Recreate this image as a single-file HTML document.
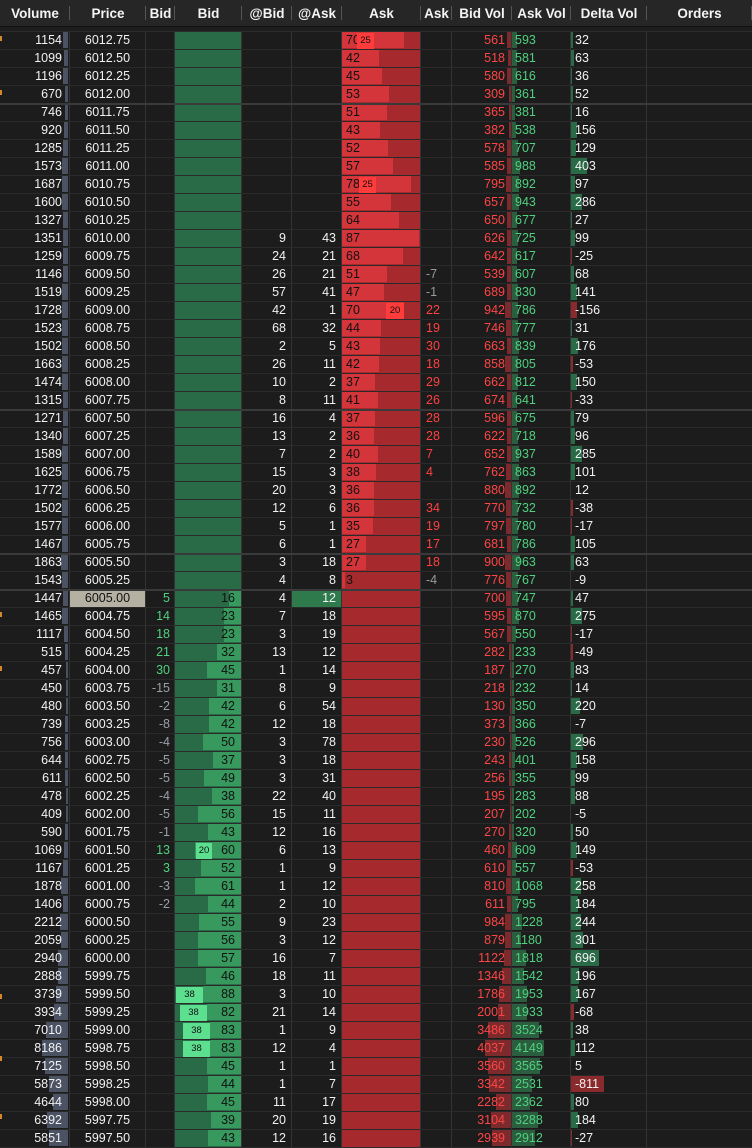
<!DOCTYPE html>
<html><head><meta charset="utf-8"><style>
*{margin:0;padding:0;box-sizing:border-box}
body{width:752px;height:1148px;background:#1c1c1c;font-family:"Liberation Sans",Arial,sans-serif;font-size:12.5px;color:#f2f2f2;overflow:hidden;position:relative}
.hd{display:flex;height:27px;background:#262626;border-bottom:1px solid #111}
.hd div{font-weight:bold;font-size:13.5px;line-height:27px;text-align:center;color:#f4f4f4;position:relative}
.hd div:after{content:"";position:absolute;right:0;top:6px;height:14px;width:1px;background:#555}
.strip{height:5px;background:#1e1e1e;border-bottom:1px solid #2c2c2c}
.r{display:flex;height:18px}
.r>div{position:relative;height:18px;line-height:17px;border-right:1px solid #333;border-bottom:1px solid #2a2a2a;white-space:nowrap;background:#1c1c1c}
.r i{position:absolute;top:0;bottom:1px;display:block}
.r em{font-style:normal;position:relative}
.a{width:70px;text-align:right;padding-right:7px}
.a i{right:1px;background:#4a5263}
.b{width:76px;text-align:center}
.c{width:29px;text-align:right;padding-right:4px}
.d{width:67px;text-align:right;padding-right:6px;color:#111;background:#2a6b47!important}
.d i{right:0;background:#37995e}
.e{width:50px;text-align:right;padding-right:5px}
.f{width:50px;text-align:right;padding-right:5px}
.g{width:79px;padding-left:4px;color:#111;background:#a5292d!important}
.g i{left:0;background:#d3353a}
.h{width:31px;padding-left:5px}
.i{width:60px;text-align:right;padding-right:6px;color:#ff4545}
.i i{right:0;background:#7c2a2c}
.j{width:59px;padding-left:3px;color:#4fd17f}
.j i{left:0;background:#2a5e3e}
.k{width:76px;padding-left:4px}
.k i.p{left:0;background:#2a6b47}
.k i.n{left:0;background:#8a2a2c}
.l{width:105px;border-right:none!important}
.gp{color:#4fd17f}.gn{color:#9aa0a8}.rp{color:#ff4040}.rn{color:#999}
.bx{position:absolute;top:1px;height:16px;font-size:9.5px;line-height:16px;text-align:center;color:#111}
.rb{background:#ff3b3b}.gb{background:#5ce08f}
.sep{position:absolute;left:0;width:752px;height:2px;background:#3a3a3a}
.om{position:absolute;left:0;width:2px;height:5px;background:#d08a2a}
</style></head><body>
<div class="hd"><div style="width:70px">Volume</div><div style="width:76px">Price</div><div style="width:29px">Bid</div><div style="width:67px">Bid</div><div style="width:50px">@Bid</div><div style="width:50px">@Ask</div><div style="width:79px">Ask</div><div style="width:31px">Ask</div><div style="width:60px">Bid Vol</div><div style="width:59px">Ask Vol</div><div style="width:76px">Delta Vol</div><div style="width:105px">Orders</div></div>
<div class="strip"></div>

<div class="r"><div class="a"><i style="width:5px"></i><em>1154</em></div><div class="b">6012.75</div><div class="c"></div><div class="d"></div><div class="e"></div><div class="f"></div><div class="g"><i style="width:62px"></i><em>70</em><span class="bx rb" style="left:15px;width:17px">25</span></div><div class="h"></div><div class="i"><i style="width:4px"></i><em>561</em></div><div class="j"><i style="width:5px"></i><em>593</em></div><div class="k"><i class="p" style="width:2px"></i><em>32</em></div><div class="l"></div></div>
<div class="r"><div class="a"><i style="width:4px"></i><em>1099</em></div><div class="b">6012.50</div><div class="c"></div><div class="d"></div><div class="e"></div><div class="f"></div><div class="g"><i style="width:37px"></i><em>42</em></div><div class="h"></div><div class="i"><i style="width:3px"></i><em>518</em></div><div class="j"><i style="width:5px"></i><em>581</em></div><div class="k"><i class="p" style="width:3px"></i><em>63</em></div><div class="l"></div></div>
<div class="r"><div class="a"><i style="width:5px"></i><em>1196</em></div><div class="b">6012.25</div><div class="c"></div><div class="d"></div><div class="e"></div><div class="f"></div><div class="g"><i style="width:40px"></i><em>45</em></div><div class="h"></div><div class="i"><i style="width:4px"></i><em>580</em></div><div class="j"><i style="width:5px"></i><em>616</em></div><div class="k"><i class="p" style="width:1px"></i><em>36</em></div><div class="l"></div></div>
<div class="r"><div class="a"><i style="width:3px"></i><em>670</em></div><div class="b">6012.00</div><div class="c"></div><div class="d"></div><div class="e"></div><div class="f"></div><div class="g"><i style="width:47px"></i><em>53</em></div><div class="h"></div><div class="i"><i style="width:2px"></i><em>309</em></div><div class="j"><i style="width:3px"></i><em>361</em></div><div class="k"><i class="p" style="width:2px"></i><em>52</em></div><div class="l"></div></div>
<div class="r"><div class="a"><i style="width:3px"></i><em>746</em></div><div class="b">6011.75</div><div class="c"></div><div class="d"></div><div class="e"></div><div class="f"></div><div class="g"><i style="width:45px"></i><em>51</em></div><div class="h"></div><div class="i"><i style="width:2px"></i><em>365</em></div><div class="j"><i style="width:3px"></i><em>381</em></div><div class="k"><i class="p" style="width:1px"></i><em>16</em></div><div class="l"></div></div>
<div class="r"><div class="a"><i style="width:4px"></i><em>920</em></div><div class="b">6011.50</div><div class="c"></div><div class="d"></div><div class="e"></div><div class="f"></div><div class="g"><i style="width:38px"></i><em>43</em></div><div class="h"></div><div class="i"><i style="width:2px"></i><em>382</em></div><div class="j"><i style="width:4px"></i><em>538</em></div><div class="k"><i class="p" style="width:6px"></i><em>156</em></div><div class="l"></div></div>
<div class="r"><div class="a"><i style="width:5px"></i><em>1285</em></div><div class="b">6011.25</div><div class="c"></div><div class="d"></div><div class="e"></div><div class="f"></div><div class="g"><i style="width:46px"></i><em>52</em></div><div class="h"></div><div class="i"><i style="width:4px"></i><em>578</em></div><div class="j"><i style="width:6px"></i><em>707</em></div><div class="k"><i class="p" style="width:5px"></i><em>129</em></div><div class="l"></div></div>
<div class="r"><div class="a"><i style="width:6px"></i><em>1573</em></div><div class="b">6011.00</div><div class="c"></div><div class="d"></div><div class="e"></div><div class="f"></div><div class="g"><i style="width:51px"></i><em>57</em></div><div class="h"></div><div class="i"><i style="width:4px"></i><em>585</em></div><div class="j"><i style="width:8px"></i><em>988</em></div><div class="k"><i class="p" style="width:16px"></i><em>403</em></div><div class="l"></div></div>
<div class="r"><div class="a"><i style="width:6px"></i><em>1687</em></div><div class="b">6010.75</div><div class="c"></div><div class="d"></div><div class="e"></div><div class="f"></div><div class="g"><i style="width:69px"></i><em>78</em><span class="bx rb" style="left:17px;width:17px">25</span></div><div class="h"></div><div class="i"><i style="width:5px"></i><em>795</em></div><div class="j"><i style="width:7px"></i><em>892</em></div><div class="k"><i class="p" style="width:4px"></i><em>97</em></div><div class="l"></div></div>
<div class="r"><div class="a"><i style="width:6px"></i><em>1600</em></div><div class="b">6010.50</div><div class="c"></div><div class="d"></div><div class="e"></div><div class="f"></div><div class="g"><i style="width:49px"></i><em>55</em></div><div class="h"></div><div class="i"><i style="width:4px"></i><em>657</em></div><div class="j"><i style="width:7px"></i><em>943</em></div><div class="k"><i class="p" style="width:11px"></i><em>286</em></div><div class="l"></div></div>
<div class="r"><div class="a"><i style="width:5px"></i><em>1327</em></div><div class="b">6010.25</div><div class="c"></div><div class="d"></div><div class="e"></div><div class="f"></div><div class="g"><i style="width:57px"></i><em>64</em></div><div class="h"></div><div class="i"><i style="width:4px"></i><em>650</em></div><div class="j"><i style="width:5px"></i><em>677</em></div><div class="k"><i class="p" style="width:1px"></i><em>27</em></div><div class="l"></div></div>
<div class="r"><div class="a"><i style="width:5px"></i><em>1351</em></div><div class="b">6010.00</div><div class="c"></div><div class="d"></div><div class="e">9</div><div class="f">43</div><div class="g"><i style="width:77px"></i><em>87</em></div><div class="h"></div><div class="i"><i style="width:4px"></i><em>626</em></div><div class="j"><i style="width:6px"></i><em>725</em></div><div class="k"><i class="p" style="width:4px"></i><em>99</em></div><div class="l"></div></div>
<div class="r"><div class="a"><i style="width:5px"></i><em>1259</em></div><div class="b">6009.75</div><div class="c"></div><div class="d"></div><div class="e">24</div><div class="f">21</div><div class="g"><i style="width:61px"></i><em>68</em></div><div class="h"></div><div class="i"><i style="width:4px"></i><em>642</em></div><div class="j"><i style="width:5px"></i><em>617</em></div><div class="k"><i class="n" style="width:1px"></i><em>-25</em></div><div class="l"></div></div>
<div class="r"><div class="a"><i style="width:5px"></i><em>1146</em></div><div class="b">6009.50</div><div class="c"></div><div class="d"></div><div class="e">26</div><div class="f">21</div><div class="g"><i style="width:45px"></i><em>51</em></div><div class="h rn">-7</div><div class="i"><i style="width:4px"></i><em>539</em></div><div class="j"><i style="width:5px"></i><em>607</em></div><div class="k"><i class="p" style="width:3px"></i><em>68</em></div><div class="l"></div></div>
<div class="r"><div class="a"><i style="width:6px"></i><em>1519</em></div><div class="b">6009.25</div><div class="c"></div><div class="d"></div><div class="e">57</div><div class="f">41</div><div class="g"><i style="width:42px"></i><em>47</em></div><div class="h rn">-1</div><div class="i"><i style="width:4px"></i><em>689</em></div><div class="j"><i style="width:6px"></i><em>830</em></div><div class="k"><i class="p" style="width:6px"></i><em>141</em></div><div class="l"></div></div>
<div class="r"><div class="a"><i style="width:6px"></i><em>1728</em></div><div class="b">6009.00</div><div class="c"></div><div class="d"></div><div class="e">42</div><div class="f">1</div><div class="g"><i style="width:62px"></i><em>70</em><span class="bx rb" style="left:44px;width:18px">20</span></div><div class="h rp">22</div><div class="i"><i style="width:6px"></i><em>942</em></div><div class="j"><i style="width:6px"></i><em>786</em></div><div class="k"><i class="n" style="width:6px"></i><em>-156</em></div><div class="l"></div></div>
<div class="r"><div class="a"><i style="width:6px"></i><em>1523</em></div><div class="b">6008.75</div><div class="c"></div><div class="d"></div><div class="e">68</div><div class="f">32</div><div class="g"><i style="width:39px"></i><em>44</em></div><div class="h rp">19</div><div class="i"><i style="width:5px"></i><em>746</em></div><div class="j"><i style="width:6px"></i><em>777</em></div><div class="k"><i class="p" style="width:1px"></i><em>31</em></div><div class="l"></div></div>
<div class="r"><div class="a"><i style="width:6px"></i><em>1502</em></div><div class="b">6008.50</div><div class="c"></div><div class="d"></div><div class="e">2</div><div class="f">5</div><div class="g"><i style="width:38px"></i><em>43</em></div><div class="h rp">30</div><div class="i"><i style="width:4px"></i><em>663</em></div><div class="j"><i style="width:7px"></i><em>839</em></div><div class="k"><i class="p" style="width:7px"></i><em>176</em></div><div class="l"></div></div>
<div class="r"><div class="a"><i style="width:6px"></i><em>1663</em></div><div class="b">6008.25</div><div class="c"></div><div class="d"></div><div class="e">26</div><div class="f">11</div><div class="g"><i style="width:37px"></i><em>42</em></div><div class="h rp">18</div><div class="i"><i style="width:6px"></i><em>858</em></div><div class="j"><i style="width:6px"></i><em>805</em></div><div class="k"><i class="n" style="width:2px"></i><em>-53</em></div><div class="l"></div></div>
<div class="r"><div class="a"><i style="width:6px"></i><em>1474</em></div><div class="b">6008.00</div><div class="c"></div><div class="d"></div><div class="e">10</div><div class="f">2</div><div class="g"><i style="width:33px"></i><em>37</em></div><div class="h rp">29</div><div class="i"><i style="width:4px"></i><em>662</em></div><div class="j"><i style="width:6px"></i><em>812</em></div><div class="k"><i class="p" style="width:6px"></i><em>150</em></div><div class="l"></div></div>
<div class="r"><div class="a"><i style="width:5px"></i><em>1315</em></div><div class="b">6007.75</div><div class="c"></div><div class="d"></div><div class="e">8</div><div class="f">11</div><div class="g"><i style="width:36px"></i><em>41</em></div><div class="h rp">26</div><div class="i"><i style="width:4px"></i><em>674</em></div><div class="j"><i style="width:5px"></i><em>641</em></div><div class="k"><i class="n" style="width:1px"></i><em>-33</em></div><div class="l"></div></div>
<div class="r"><div class="a"><i style="width:5px"></i><em>1271</em></div><div class="b">6007.50</div><div class="c"></div><div class="d"></div><div class="e">16</div><div class="f">4</div><div class="g"><i style="width:33px"></i><em>37</em></div><div class="h rp">28</div><div class="i"><i style="width:4px"></i><em>596</em></div><div class="j"><i style="width:5px"></i><em>675</em></div><div class="k"><i class="p" style="width:3px"></i><em>79</em></div><div class="l"></div></div>
<div class="r"><div class="a"><i style="width:5px"></i><em>1340</em></div><div class="b">6007.25</div><div class="c"></div><div class="d"></div><div class="e">13</div><div class="f">2</div><div class="g"><i style="width:32px"></i><em>36</em></div><div class="h rp">28</div><div class="i"><i style="width:4px"></i><em>622</em></div><div class="j"><i style="width:6px"></i><em>718</em></div><div class="k"><i class="p" style="width:4px"></i><em>96</em></div><div class="l"></div></div>
<div class="r"><div class="a"><i style="width:6px"></i><em>1589</em></div><div class="b">6007.00</div><div class="c"></div><div class="d"></div><div class="e">7</div><div class="f">2</div><div class="g"><i style="width:36px"></i><em>40</em></div><div class="h rp">7</div><div class="i"><i style="width:4px"></i><em>652</em></div><div class="j"><i style="width:7px"></i><em>937</em></div><div class="k"><i class="p" style="width:11px"></i><em>285</em></div><div class="l"></div></div>
<div class="r"><div class="a"><i style="width:6px"></i><em>1625</em></div><div class="b">6006.75</div><div class="c"></div><div class="d"></div><div class="e">15</div><div class="f">3</div><div class="g"><i style="width:34px"></i><em>38</em></div><div class="h rp">4</div><div class="i"><i style="width:5px"></i><em>762</em></div><div class="j"><i style="width:7px"></i><em>863</em></div><div class="k"><i class="p" style="width:4px"></i><em>101</em></div><div class="l"></div></div>
<div class="r"><div class="a"><i style="width:6px"></i><em>1772</em></div><div class="b">6006.50</div><div class="c"></div><div class="d"></div><div class="e">20</div><div class="f">3</div><div class="g"><i style="width:32px"></i><em>36</em></div><div class="h"></div><div class="i"><i style="width:6px"></i><em>880</em></div><div class="j"><i style="width:7px"></i><em>892</em></div><div class="k"><em>12</em></div><div class="l"></div></div>
<div class="r"><div class="a"><i style="width:6px"></i><em>1502</em></div><div class="b">6006.25</div><div class="c"></div><div class="d"></div><div class="e">12</div><div class="f">6</div><div class="g"><i style="width:32px"></i><em>36</em></div><div class="h rp">34</div><div class="i"><i style="width:5px"></i><em>770</em></div><div class="j"><i style="width:6px"></i><em>732</em></div><div class="k"><i class="n" style="width:2px"></i><em>-38</em></div><div class="l"></div></div>
<div class="r"><div class="a"><i style="width:6px"></i><em>1577</em></div><div class="b">6006.00</div><div class="c"></div><div class="d"></div><div class="e">5</div><div class="f">1</div><div class="g"><i style="width:31px"></i><em>35</em></div><div class="h rp">19</div><div class="i"><i style="width:5px"></i><em>797</em></div><div class="j"><i style="width:6px"></i><em>780</em></div><div class="k"><i class="n" style="width:1px"></i><em>-17</em></div><div class="l"></div></div>
<div class="r"><div class="a"><i style="width:6px"></i><em>1467</em></div><div class="b">6005.75</div><div class="c"></div><div class="d"></div><div class="e">6</div><div class="f">1</div><div class="g"><i style="width:24px"></i><em>27</em></div><div class="h rp">17</div><div class="i"><i style="width:4px"></i><em>681</em></div><div class="j"><i style="width:6px"></i><em>786</em></div><div class="k"><i class="p" style="width:4px"></i><em>105</em></div><div class="l"></div></div>
<div class="r"><div class="a"><i style="width:7px"></i><em>1863</em></div><div class="b">6005.50</div><div class="c"></div><div class="d"></div><div class="e">3</div><div class="f">18</div><div class="g"><i style="width:24px"></i><em>27</em></div><div class="h rp">18</div><div class="i"><i style="width:6px"></i><em>900</em></div><div class="j"><i style="width:8px"></i><em>963</em></div><div class="k"><i class="p" style="width:3px"></i><em>63</em></div><div class="l"></div></div>
<div class="r"><div class="a"><i style="width:6px"></i><em>1543</em></div><div class="b">6005.25</div><div class="c"></div><div class="d"></div><div class="e">4</div><div class="f">8</div><div class="g"><i style="width:3px"></i><em>3</em></div><div class="h rn">-4</div><div class="i"><i style="width:5px"></i><em>776</em></div><div class="j"><i style="width:6px"></i><em>767</em></div><div class="k"><em>-9</em></div><div class="l"></div></div>
<div class="r"><div class="a"><i style="width:5px"></i><em>1447</em></div><div class="b" style="background:#b5b1a2;color:#111">6005.00</div><div class="c gp">5</div><div class="d"><i style="width:12px"></i><em>16</em></div><div class="e">4</div><div class="f" style="background:#2f7a4c">12</div><div class="g"></div><div class="h"></div><div class="i"><i style="width:5px"></i><em>700</em></div><div class="j"><i style="width:6px"></i><em>747</em></div><div class="k"><i class="p" style="width:2px"></i><em>47</em></div><div class="l"></div></div>
<div class="r"><div class="a"><i style="width:6px"></i><em>1465</em></div><div class="b">6004.75</div><div class="c gp">14</div><div class="d"><i style="width:17px"></i><em>23</em></div><div class="e">7</div><div class="f">18</div><div class="g"></div><div class="h"></div><div class="i"><i style="width:4px"></i><em>595</em></div><div class="j"><i style="width:7px"></i><em>870</em></div><div class="k"><i class="p" style="width:11px"></i><em>275</em></div><div class="l"></div></div>
<div class="r"><div class="a"><i style="width:4px"></i><em>1117</em></div><div class="b">6004.50</div><div class="c gp">18</div><div class="d"><i style="width:17px"></i><em>23</em></div><div class="e">3</div><div class="f">19</div><div class="g"></div><div class="h"></div><div class="i"><i style="width:4px"></i><em>567</em></div><div class="j"><i style="width:4px"></i><em>550</em></div><div class="k"><i class="n" style="width:1px"></i><em>-17</em></div><div class="l"></div></div>
<div class="r"><div class="a"><i style="width:3px"></i><em>515</em></div><div class="b">6004.25</div><div class="c gp">21</div><div class="d"><i style="width:24px"></i><em>32</em></div><div class="e">13</div><div class="f">12</div><div class="g"></div><div class="h"></div><div class="i"><i style="width:2px"></i><em>282</em></div><div class="j"><i style="width:2px"></i><em>233</em></div><div class="k"><i class="n" style="width:2px"></i><em>-49</em></div><div class="l"></div></div>
<div class="r"><div class="a"><i style="width:2px"></i><em>457</em></div><div class="b">6004.00</div><div class="c gp">30</div><div class="d"><i style="width:34px"></i><em>45</em></div><div class="e">1</div><div class="f">14</div><div class="g"></div><div class="h"></div><div class="i"><i style="width:1px"></i><em>187</em></div><div class="j"><i style="width:2px"></i><em>270</em></div><div class="k"><i class="p" style="width:3px"></i><em>83</em></div><div class="l"></div></div>
<div class="r"><div class="a"><i style="width:2px"></i><em>450</em></div><div class="b">6003.75</div><div class="c gn">-15</div><div class="d"><i style="width:24px"></i><em>31</em></div><div class="e">8</div><div class="f">9</div><div class="g"></div><div class="h"></div><div class="i"><i style="width:1px"></i><em>218</em></div><div class="j"><i style="width:2px"></i><em>232</em></div><div class="k"><i class="p" style="width:1px"></i><em>14</em></div><div class="l"></div></div>
<div class="r"><div class="a"><i style="width:2px"></i><em>480</em></div><div class="b">6003.50</div><div class="c gn">-2</div><div class="d"><i style="width:32px"></i><em>42</em></div><div class="e">6</div><div class="f">54</div><div class="g"></div><div class="h"></div><div class="i"><i style="width:1px"></i><em>130</em></div><div class="j"><i style="width:3px"></i><em>350</em></div><div class="k"><i class="p" style="width:9px"></i><em>220</em></div><div class="l"></div></div>
<div class="r"><div class="a"><i style="width:3px"></i><em>739</em></div><div class="b">6003.25</div><div class="c gn">-8</div><div class="d"><i style="width:32px"></i><em>42</em></div><div class="e">12</div><div class="f">18</div><div class="g"></div><div class="h"></div><div class="i"><i style="width:2px"></i><em>373</em></div><div class="j"><i style="width:3px"></i><em>366</em></div><div class="k"><em>-7</em></div><div class="l"></div></div>
<div class="r"><div class="a"><i style="width:3px"></i><em>756</em></div><div class="b">6003.00</div><div class="c gn">-4</div><div class="d"><i style="width:38px"></i><em>50</em></div><div class="e">3</div><div class="f">78</div><div class="g"></div><div class="h"></div><div class="i"><i style="width:1px"></i><em>230</em></div><div class="j"><i style="width:4px"></i><em>526</em></div><div class="k"><i class="p" style="width:12px"></i><em>296</em></div><div class="l"></div></div>
<div class="r"><div class="a"><i style="width:3px"></i><em>644</em></div><div class="b">6002.75</div><div class="c gn">-5</div><div class="d"><i style="width:28px"></i><em>37</em></div><div class="e">3</div><div class="f">18</div><div class="g"></div><div class="h"></div><div class="i"><i style="width:2px"></i><em>243</em></div><div class="j"><i style="width:3px"></i><em>401</em></div><div class="k"><i class="p" style="width:6px"></i><em>158</em></div><div class="l"></div></div>
<div class="r"><div class="a"><i style="width:3px"></i><em>611</em></div><div class="b">6002.50</div><div class="c gn">-5</div><div class="d"><i style="width:37px"></i><em>49</em></div><div class="e">3</div><div class="f">31</div><div class="g"></div><div class="h"></div><div class="i"><i style="width:2px"></i><em>256</em></div><div class="j"><i style="width:3px"></i><em>355</em></div><div class="k"><i class="p" style="width:4px"></i><em>99</em></div><div class="l"></div></div>
<div class="r"><div class="a"><i style="width:2px"></i><em>478</em></div><div class="b">6002.25</div><div class="c gn">-4</div><div class="d"><i style="width:29px"></i><em>38</em></div><div class="e">22</div><div class="f">40</div><div class="g"></div><div class="h"></div><div class="i"><i style="width:1px"></i><em>195</em></div><div class="j"><i style="width:2px"></i><em>283</em></div><div class="k"><i class="p" style="width:4px"></i><em>88</em></div><div class="l"></div></div>
<div class="r"><div class="a"><i style="width:2px"></i><em>409</em></div><div class="b">6002.00</div><div class="c gn">-5</div><div class="d"><i style="width:43px"></i><em>56</em></div><div class="e">15</div><div class="f">11</div><div class="g"></div><div class="h"></div><div class="i"><i style="width:1px"></i><em>207</em></div><div class="j"><i style="width:2px"></i><em>202</em></div><div class="k"><em>-5</em></div><div class="l"></div></div>
<div class="r"><div class="a"><i style="width:3px"></i><em>590</em></div><div class="b">6001.75</div><div class="c gn">-1</div><div class="d"><i style="width:33px"></i><em>43</em></div><div class="e">12</div><div class="f">16</div><div class="g"></div><div class="h"></div><div class="i"><i style="width:2px"></i><em>270</em></div><div class="j"><i style="width:2px"></i><em>320</em></div><div class="k"><i class="p" style="width:2px"></i><em>50</em></div><div class="l"></div></div>
<div class="r"><div class="a"><i style="width:4px"></i><em>1069</em></div><div class="b">6001.50</div><div class="c gp">13</div><div class="d"><i style="width:46px"></i><span class="bx gb" style="left:21px;width:16px">20</span><em>60</em></div><div class="e">6</div><div class="f">13</div><div class="g"></div><div class="h"></div><div class="i"><i style="width:3px"></i><em>460</em></div><div class="j"><i style="width:5px"></i><em>609</em></div><div class="k"><i class="p" style="width:6px"></i><em>149</em></div><div class="l"></div></div>
<div class="r"><div class="a"><i style="width:5px"></i><em>1167</em></div><div class="b">6001.25</div><div class="c gp">3</div><div class="d"><i style="width:40px"></i><em>52</em></div><div class="e">1</div><div class="f">9</div><div class="g"></div><div class="h"></div><div class="i"><i style="width:4px"></i><em>610</em></div><div class="j"><i style="width:4px"></i><em>557</em></div><div class="k"><i class="n" style="width:2px"></i><em>-53</em></div><div class="l"></div></div>
<div class="r"><div class="a"><i style="width:7px"></i><em>1878</em></div><div class="b">6001.00</div><div class="c gn">-3</div><div class="d"><i style="width:46px"></i><em>61</em></div><div class="e">1</div><div class="f">12</div><div class="g"></div><div class="h"></div><div class="i"><i style="width:5px"></i><em>810</em></div><div class="j"><i style="width:8px"></i><em>1068</em></div><div class="k"><i class="p" style="width:10px"></i><em>258</em></div><div class="l"></div></div>
<div class="r"><div class="a"><i style="width:5px"></i><em>1406</em></div><div class="b">6000.75</div><div class="c gn">-2</div><div class="d"><i style="width:33px"></i><em>44</em></div><div class="e">2</div><div class="f">10</div><div class="g"></div><div class="h"></div><div class="i"><i style="width:4px"></i><em>611</em></div><div class="j"><i style="width:6px"></i><em>795</em></div><div class="k"><i class="p" style="width:7px"></i><em>184</em></div><div class="l"></div></div>
<div class="r"><div class="a"><i style="width:8px"></i><em>2212</em></div><div class="b">6000.50</div><div class="c"></div><div class="d"><i style="width:42px"></i><em>55</em></div><div class="e">9</div><div class="f">23</div><div class="g"></div><div class="h"></div><div class="i"><i style="width:6px"></i><em>984</em></div><div class="j"><i style="width:10px"></i><em>1228</em></div><div class="k"><i class="p" style="width:10px"></i><em>244</em></div><div class="l"></div></div>
<div class="r"><div class="a"><i style="width:7px"></i><em>2059</em></div><div class="b">6000.25</div><div class="c"></div><div class="d"><i style="width:43px"></i><em>56</em></div><div class="e">3</div><div class="f">12</div><div class="g"></div><div class="h"></div><div class="i"><i style="width:6px"></i><em>879</em></div><div class="j"><i style="width:9px"></i><em>1180</em></div><div class="k"><i class="p" style="width:12px"></i><em>301</em></div><div class="l"></div></div>
<div class="r"><div class="a"><i style="width:10px"></i><em>2940</em></div><div class="b">6000.00</div><div class="c"></div><div class="d"><i style="width:43px"></i><em>57</em></div><div class="e">16</div><div class="f">7</div><div class="g"></div><div class="h"></div><div class="i"><i style="width:7px"></i><em>1122</em></div><div class="j"><i style="width:14px"></i><em>1818</em></div><div class="k"><i class="p" style="width:28px"></i><em>696</em></div><div class="l"></div></div>
<div class="r"><div class="a"><i style="width:10px"></i><em>2888</em></div><div class="b">5999.75</div><div class="c"></div><div class="d"><i style="width:35px"></i><em>46</em></div><div class="e">18</div><div class="f">11</div><div class="g"></div><div class="h"></div><div class="i"><i style="width:9px"></i><em>1346</em></div><div class="j"><i style="width:12px"></i><em>1542</em></div><div class="k"><i class="p" style="width:8px"></i><em>196</em></div><div class="l"></div></div>
<div class="r"><div class="a"><i style="width:12px"></i><em>3739</em></div><div class="b">5999.50</div><div class="c"></div><div class="d"><i style="width:38px"></i><span class="bx gb" style="left:1px;width:27px">38</span><em>88</em></div><div class="e">3</div><div class="f">10</div><div class="g"></div><div class="h"></div><div class="i"><i style="width:12px"></i><em>1786</em></div><div class="j"><i style="width:15px"></i><em>1953</em></div><div class="k"><i class="p" style="width:7px"></i><em>167</em></div><div class="l"></div></div>
<div class="r"><div class="a"><i style="width:14px"></i><em>3934</em></div><div class="b">5999.25</div><div class="c"></div><div class="d"><i style="width:34px"></i><span class="bx gb" style="left:5px;width:27px">38</span><em>82</em></div><div class="e">21</div><div class="f">14</div><div class="g"></div><div class="h"></div><div class="i"><i style="width:13px"></i><em>2001</em></div><div class="j"><i style="width:15px"></i><em>1933</em></div><div class="k"><i class="n" style="width:3px"></i><em>-68</em></div><div class="l"></div></div>
<div class="r"><div class="a"><i style="width:22px"></i><em>7010</em></div><div class="b">5999.00</div><div class="c"></div><div class="d"><i style="width:31px"></i><span class="bx gb" style="left:8px;width:27px">38</span><em>83</em></div><div class="e">1</div><div class="f">9</div><div class="g"></div><div class="h"></div><div class="i"><i style="width:23px"></i><em>3486</em></div><div class="j"><i style="width:27px"></i><em>3524</em></div><div class="k"><i class="p" style="width:2px"></i><em>38</em></div><div class="l"></div></div>
<div class="r"><div class="a"><i style="width:26px"></i><em>8186</em></div><div class="b">5998.75</div><div class="c"></div><div class="d"><i style="width:31px"></i><span class="bx gb" style="left:8px;width:27px">38</span><em>83</em></div><div class="e">12</div><div class="f">4</div><div class="g"></div><div class="h"></div><div class="i"><i style="width:26px"></i><em>4037</em></div><div class="j"><i style="width:32px"></i><em>4149</em></div><div class="k"><i class="p" style="width:4px"></i><em>112</em></div><div class="l"></div></div>
<div class="r"><div class="a"><i style="width:23px"></i><em>7125</em></div><div class="b">5998.50</div><div class="c"></div><div class="d"><i style="width:34px"></i><em>45</em></div><div class="e">1</div><div class="f">1</div><div class="g"></div><div class="h"></div><div class="i"><i style="width:23px"></i><em>3560</em></div><div class="j"><i style="width:28px"></i><em>3565</em></div><div class="k"><em>5</em></div><div class="l"></div></div>
<div class="r"><div class="a"><i style="width:19px"></i><em>5873</em></div><div class="b">5998.25</div><div class="c"></div><div class="d"><i style="width:33px"></i><em>44</em></div><div class="e">1</div><div class="f">7</div><div class="g"></div><div class="h"></div><div class="i"><i style="width:22px"></i><em>3342</em></div><div class="j"><i style="width:20px"></i><em>2531</em></div><div class="k"><i class="n" style="width:33px"></i><em>-811</em></div><div class="l"></div></div>
<div class="r"><div class="a"><i style="width:15px"></i><em>4644</em></div><div class="b">5998.00</div><div class="c"></div><div class="d"><i style="width:34px"></i><em>45</em></div><div class="e">11</div><div class="f">17</div><div class="g"></div><div class="h"></div><div class="i"><i style="width:15px"></i><em>2282</em></div><div class="j"><i style="width:18px"></i><em>2362</em></div><div class="k"><i class="p" style="width:3px"></i><em>80</em></div><div class="l"></div></div>
<div class="r"><div class="a"><i style="width:21px"></i><em>6392</em></div><div class="b">5997.75</div><div class="c"></div><div class="d"><i style="width:30px"></i><em>39</em></div><div class="e">20</div><div class="f">19</div><div class="g"></div><div class="h"></div><div class="i"><i style="width:20px"></i><em>3104</em></div><div class="j"><i style="width:26px"></i><em>3288</em></div><div class="k"><i class="p" style="width:7px"></i><em>184</em></div><div class="l"></div></div>
<div class="r"><div class="a"><i style="width:19px"></i><em>5851</em></div><div class="b">5997.50</div><div class="c"></div><div class="d"><i style="width:33px"></i><em>43</em></div><div class="e">12</div><div class="f">16</div><div class="g"></div><div class="h"></div><div class="i"><i style="width:19px"></i><em>2939</em></div><div class="j"><i style="width:23px"></i><em>2912</em></div><div class="k"><i class="n" style="width:1px"></i><em>-27</em></div><div class="l"></div></div>

<div class="sep" style="top:103px"></div>
<div class="sep" style="top:409px"></div>
<div class="sep" style="top:553px"></div>
<div class="sep" style="top:589px"></div>
<div class="om" style="top:36px"></div>
<div class="om" style="top:90px"></div>
<div class="om" style="top:612px"></div>
<div class="om" style="top:666px"></div>
<div class="om" style="top:994px"></div>
<div class="om" style="top:1056px"></div>
<div class="om" style="top:1114px"></div>
</body></html>
